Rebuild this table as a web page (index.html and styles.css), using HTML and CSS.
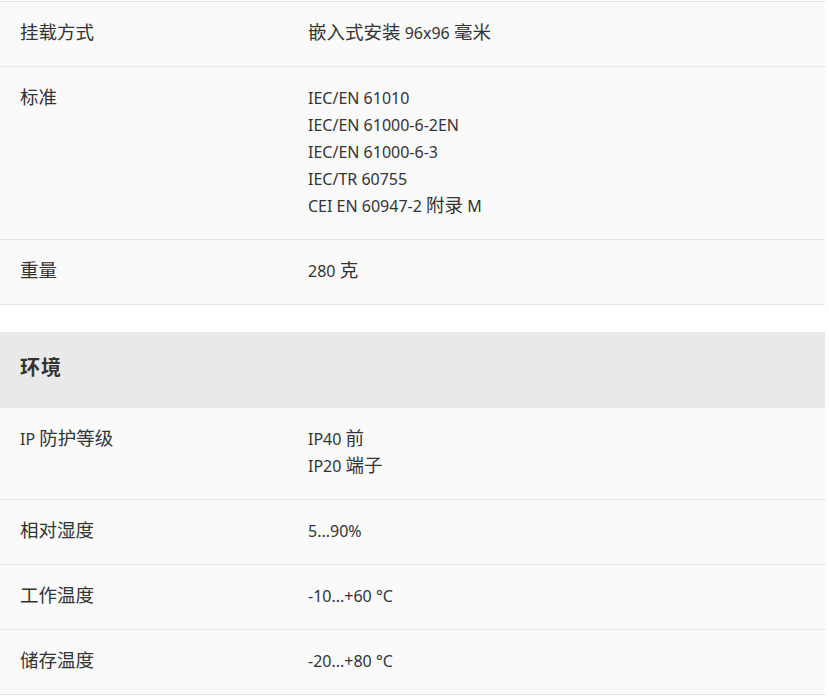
FILE: index.html
```html
<!DOCTYPE html>
<html lang="zh-CN">
<head>
<meta charset="utf-8">
<title>规格</title>
<link rel="stylesheet" href="styles.css">
</head>
<body>
<div class="specs">
  <section class="group">
    <div class="row">
      <div class="label"><span class="zh">挂载方式</span></div>
      <div class="value"><span class="zh">嵌入式安装</span> 96x96 <span class="zh">毫米</span></div>
    </div>
    <div class="row">
      <div class="label"><span class="zh">标准</span></div>
      <div class="value">
        <div>IEC/EN 61010</div>
        <div>IEC/EN 61000-6-2EN</div>
        <div>IEC/EN 61000-6-3</div>
        <div>IEC/TR 60755</div>
        <div>CEI EN 60947-2 <span class="zh">附录</span> M</div>
      </div>
    </div>
    <div class="row">
      <div class="label"><span class="zh">重量</span></div>
      <div class="value">280 <span class="zh">克</span></div>
    </div>
  </section>
  <section class="group spaced">
    <h2 class="group-title">环境</h2>
    <div class="row">
      <div class="label">IP <span class="zh">防护等级</span></div>
      <div class="value">
        <div>IP40 <span class="zh">前</span></div>
        <div>IP20 <span class="zh">端子</span></div>
      </div>
    </div>
    <div class="row">
      <div class="label"><span class="zh">相对湿度</span></div>
      <div class="value">5...90%</div>
    </div>
    <div class="row">
      <div class="label"><span class="zh">工作温度</span></div>
      <div class="value">-10...+60 °C</div>
    </div>
    <div class="row">
      <div class="label"><span class="zh">储存温度</span></div>
      <div class="value">-20...+80 °C</div>
    </div>
  </section>
</div>
</body>
</html>
```
FILE: styles.css
```css
html, body {
  margin: 0;
  padding: 0;
  background: #ffffff;
}
body {
  font-family: "Noto Sans", "Noto Sans CJK SC", sans-serif;
  font-size: 16px;
  line-height: 27px;
  color: #333333;
}
.specs {
  width: 825px;
  padding-top: 1px;
}
.group {
  border-top: 1px solid #e6e6e6;
}
.group.spaced {
  margin-top: 27px;
  border-top: none;
}
.group-title {
  box-sizing: border-box;
  margin: 0;
  height: 76px;
  display: flex;
  align-items: center;
  padding: 0 20px 7px;
  background: #e9e9e9;
  font-family: "Noto Sans CJK SC", sans-serif;
  font-size: 20px;
  font-weight: 700;
  letter-spacing: 1px;
  color: #333333;
}
.row {
  display: grid;
  grid-template-columns: 288px 1fr;
  padding: 18px 20px 19px;
  background: #fafafa;
  border-bottom: 1px solid #e6e6e6;
}
.value div {
  height: 27px;
}
.zh {
  font-family: "Noto Sans CJK SC", sans-serif;
  font-size: 18.5px;
  line-height: 1;
}
```
